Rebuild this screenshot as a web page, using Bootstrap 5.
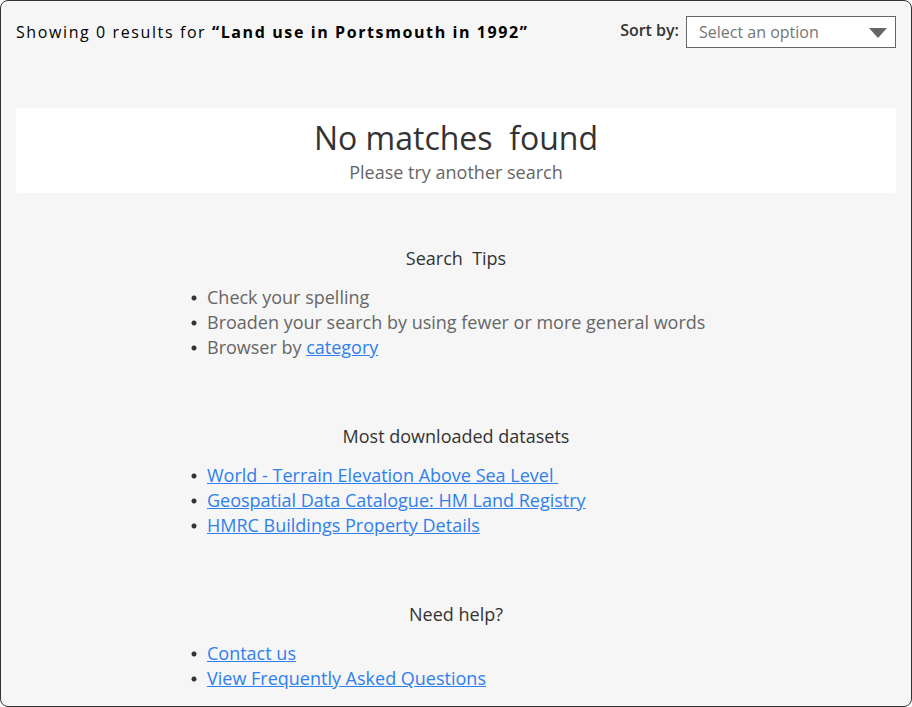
<!DOCTYPE html>
<html lang="en">
<head>
<meta charset="utf-8">
<meta name="viewport" content="width=device-width, initial-scale=1">
<title>Search results</title>
<link href="https://cdn.jsdelivr.net/npm/bootstrap@5.3.0/dist/css/bootstrap.min.css" rel="stylesheet">
<style>
body { font-family: "Open Sans", sans-serif; font-size: 18px; line-height: 25px; color: #666; background: #fff; }
.results-panel { background: #f6f6f6; border: 1px solid #333; border-radius: 8px; padding: 15px 15px 14px; }
.summary { font-size: 16px; line-height: 32px; letter-spacing: 0.1em; color: #000; }
.sort-group { gap: 7px; }
.sort-label { font-size: 16px; line-height: 28px; font-weight: 600; color: #333; }
.sort-box { width: 210px; }
.sort-select { height: 32px; padding: 0 32px 0 12px; font-size: 16px; line-height: 24px; color: #757575; background: #fff; border: 1px solid #666; border-radius: 0; appearance: none; }
.sort-arrow { right: 9px; top: 11px; pointer-events: none; }
.notice { background: #fff; border-radius: 4px; margin-top: 60px; padding: 8px 16px; }
.notice-title { font-size: 32px; line-height: 44px; font-weight: 400; color: #333; white-space: pre-wrap; }
.help-block { margin-top: 53px; }
.help-block + .help-block { margin-top: 64px; }
.help-title { font-size: 18px; line-height: 25px; font-weight: 400; color: #333; margin-bottom: 14px; white-space: pre-wrap; }
.help-list { padding-left: 175px; }
.help-list li { padding-left: 16px; background: radial-gradient(circle at 3px 13px, #333 2px, transparent 3px) no-repeat; }
.help-list a { color: #2f80ed; white-space: pre-wrap; }
</style>
</head>
<body>
<main class="results-panel min-vh-100">
  <header class="d-flex justify-content-between">
    <p class="summary mb-0">Showing 0 results for <strong>“Land use in Portsmouth in 1992”</strong></p>
    <div class="sort-group d-flex">
      <label class="sort-label" for="sort">Sort by:</label>
      <div class="sort-box position-relative">
        <select class="sort-select w-100" id="sort"><option>Select an option</option></select>
        <svg class="sort-arrow position-absolute" width="18" height="11" viewBox="0 0 18 11" aria-hidden="true"><path d="M0 1H18L9 11Z" fill="#666"/></svg>
      </div>
    </div>
  </header>
  <section class="notice text-center">
    <h1 class="notice-title mb-0">No matches  found</h1>
    <p class="mb-0">Please try another search</p>
  </section>
  <section class="help-block">
    <h2 class="help-title text-center">Search  Tips</h2>
    <ul class="help-list list-unstyled mb-0">
      <li>Check your spelling</li>
      <li>Broaden your search by using fewer or more general words</li>
      <li>Browser by <a href="#">category</a></li>
    </ul>
  </section>
  <section class="help-block">
    <h2 class="help-title text-center">Most downloaded datasets</h2>
    <ul class="help-list list-unstyled mb-0">
      <li><a href="#">World - Terrain Elevation Above Sea Level&nbsp;</a></li>
      <li><a href="#">Geospatial Data Catalogue: HM Land Registry</a></li>
      <li><a href="#">HMRC Buildings Property Details</a></li>
    </ul>
  </section>
  <section class="help-block">
    <h2 class="help-title text-center">Need help?</h2>
    <ul class="help-list list-unstyled mb-0">
      <li><a href="#">Contact us</a></li>
      <li><a href="#">View Frequently Asked Questions</a></li>
    </ul>
  </section>
</main>
<script src="https://cdn.jsdelivr.net/npm/bootstrap@5.3.0/dist/js/bootstrap.bundle.min.js"></script>
</body>
</html>
